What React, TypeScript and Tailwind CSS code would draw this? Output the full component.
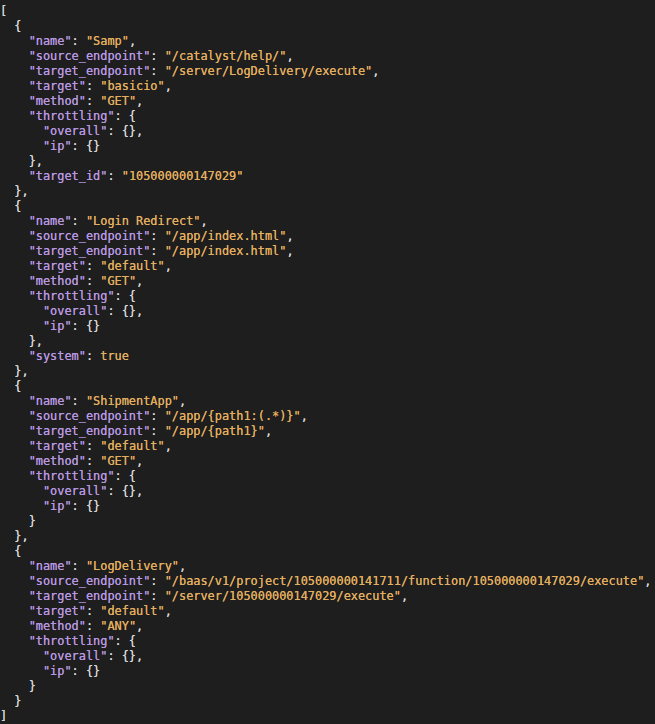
import React from "react";

type Tok = { t: string; c: "k" | "s" | "p" };

const K = (t: string): Tok => ({ t, c: "k" });
const S = (t: string): Tok => ({ t, c: "s" });
const P = (t: string): Tok => ({ t, c: "p" });

const kv = (indent: number, key: string, val: string, comma = true, raw = false): Tok[] => [
  P(" ".repeat(indent)),
  K(`"${key}"`),
  P(": "),
  S(raw ? val : `"${val}"`),
  ...(comma ? [P(",")] : []),
];

const objLines = (
  name: string,
  src: string,
  tgtEp: string,
  target: string,
  method: string,
  extra: Tok[][] | null,
  last: boolean
): Tok[][] => {
  const lines: Tok[][] = [
    [P("  {")],
    kv(4, "name", name),
    kv(4, "source_endpoint", src),
    kv(4, "target_endpoint", tgtEp),
    kv(4, "target", target),
    kv(4, "method", method),
    [P("    "), K('"throttling"'), P(": {")],
    [P("      "), K('"overall"'), P(": {},")],
    [P("      "), K('"ip"'), P(": {}")],
    [P(extra ? "    }," : "    }")],
  ];
  if (extra) lines.push(...extra);
  lines.push([P(last ? "  }" : "  },")]);
  return lines;
};

const lines: Tok[][] = [
  [P("[")],
  ...objLines(
    "Samp",
    "/catalyst/help/",
    "/server/LogDelivery/execute",
    "basicio",
    "GET",
    [kv(4, "target_id", "105000000147029", false)],
    false
  ),
  ...objLines(
    "Login Redirect",
    "/app/index.html",
    "/app/index.html",
    "default",
    "GET",
    [kv(4, "system", "true", false, true)],
    false
  ),
  ...objLines("ShipmentApp", "/app/{path1:(.*)}", "/app/{path1}", "default", "GET", null, false),
  ...objLines(
    "LogDelivery",
    "/baas/v1/project/105000000141711/function/105000000147029/execute",
    "/server/105000000147029/execute",
    "default",
    "ANY",
    null,
    true
  ),
  [P("]")],
];

const cls = {
  k: "text-[#b897e2]",
  s: "text-[#e4ae5f]",
  p: "text-[#d6d6d6]",
};

export default function App() {
  return (
    <div className="w-[655px] h-[724px] bg-[#1e1e1e] overflow-hidden flex flex-col">
      <div
        className="flex-1 pt-[4px] text-[11.9px] leading-[15px] whitespace-pre [text-shadow:0_0_0.4px_currentColor]"
        style={{ fontFamily: '"DejaVu Sans Mono", "Liberation Mono", monospace' }}
      >
        {lines.map((line, i) => (
          <div key={i} className="h-[15px]">
            {line.map((tok, j) => (
              <span key={j} className={cls[tok.c]}>
                {tok.t}
              </span>
            ))}
          </div>
        ))}
      </div>
      <div className="h-[3px] bg-[#262626]" />
    </div>
  );
}
